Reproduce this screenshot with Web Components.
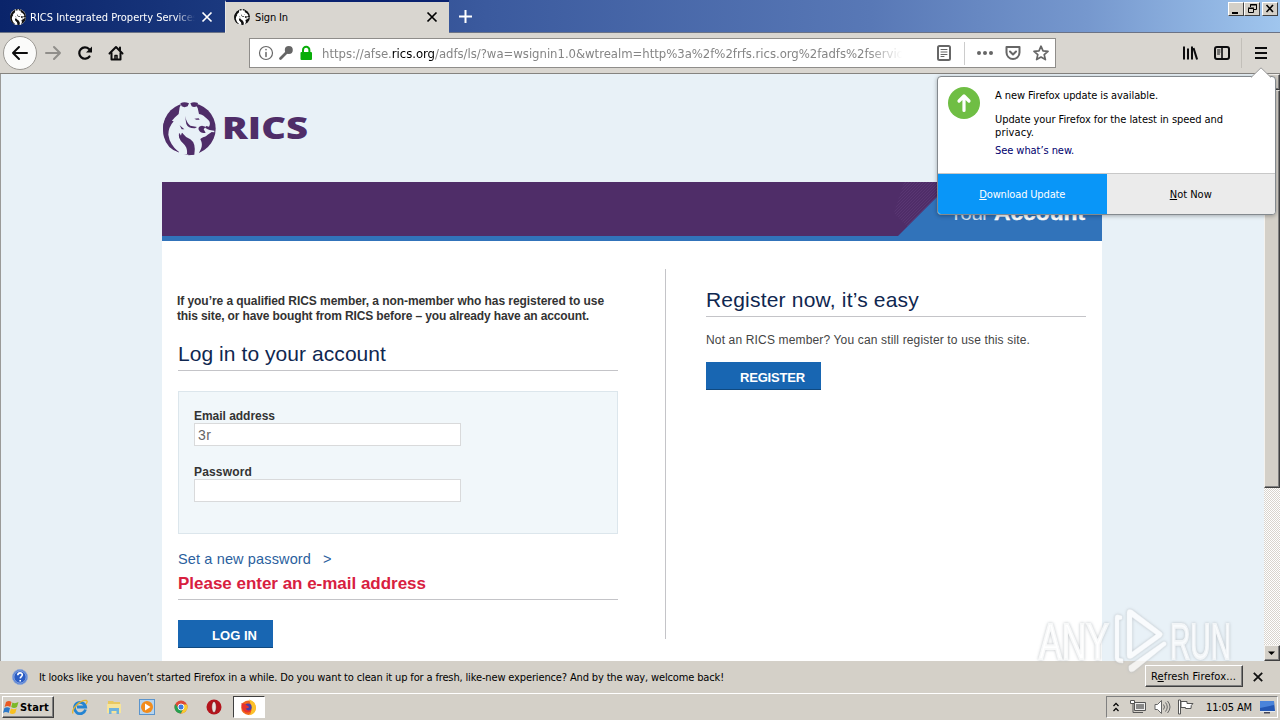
<!DOCTYPE html>
<html lang="en">
<head>
<meta charset="utf-8">
<title>Sign In</title>
<style>
body {
  margin: 0;
  width: 1280px;
  height: 720px;
  overflow: hidden;
  font: 11px/13px "DejaVu Sans Condensed", "DejaVu Sans", sans-serif;
  color: #000;
}
</style>
</head>
<body>
<desktop-screen>
  <tab-strip>
    <browser-tab label="RICS Integrated Property Services" fit="168"></browser-tab>
    <browser-tab active label="Sign In" fit="33"></browser-tab>
  </tab-strip>
  <nav-bar></nav-bar>
  <web-view>
    <rics-logo></rics-logo>
    <account-card>
      <div slot="login">
        <lead-text>
          <fit-text w="427">If you’re a qualified RICS member, a non-member who has registered to use</fit-text>
          <fit-text w="412">this site, or have bought from RICS before – you already have an account.</fit-text>
        </lead-text>
        <section-heading><fit-text w="208">Log in to your account</fit-text></section-heading>
        <login-fields>
          <form-field label="Email address" fit="81" value="3r"></form-field>
          <form-field label="Password" fit="58"></form-field>
        </login-fields>
        <link-line><fit-text w="133">Set a new password</fit-text></link-line>
        <error-line><fit-text w="248">Please enter an e-mail address</fit-text></error-line>
        <action-button style="width:95px"><fit-text w="45">LOG IN</fit-text></action-button>
      </div>
      <div slot="register">
        <section-heading><fit-text w="213">Register now, it’s easy</fit-text></section-heading>
        <plain-text><fit-text w="324">Not an RICS member? You can still register to use this site.</fit-text></plain-text>
        <action-button style="width:115px"><fit-text w="65">REGISTER</fit-text></action-button>
      </div>
    </account-card>
  </web-view>
  <notice-bar><fit-text w="685">It looks like you haven’t started Firefox in a while. Do you want to clean it up for a fresh, like-new experience? And by the way, welcome back!</fit-text></notice-bar>
  <task-bar></task-bar>
  <update-popup slot="over"></update-popup>
  <water-mark slot="over"></water-mark>
</desktop-screen>

<script>
// Registers an element whose shadow root holds the given markup.
function define(name, html) {
  customElements.define(name, class extends HTMLElement {
    constructor() {
      super()
      const shadow = this.attachShadow({mode: 'open'})
      shadow.innerHTML = typeof html == 'function' ? html(this) : html
    }
  })
}

// One line of text, spaced so that it comes out w pixels wide.
class FitText extends HTMLElement {
  constructor() {
    super()
    this.attachShadow({mode: 'open'}).innerHTML = `
<style>
:host { display: block; white-space: nowrap; }
span { display: inline-block; }
</style>
<span><slot></slot></span>`
  }
  connectedCallback() {
    const span = this.shadowRoot.querySelector('span')
    const w = Number(this.getAttribute('w'))
    const n = this.textContent.length
    if (!w || !n) return
    span.style.letterSpacing = '0px'
    const natural = span.getBoundingClientRect().width
    span.style.letterSpacing = (w - natural) / n + 'px'
  }
}

const lion = `
<ellipse cx="81" cy="80" rx="79" ry="78" fill="var(--ink)"/>
<path fill="var(--paper)" d="M49 0 56 8 52 16 49 36 C38 46 26 56 22 70 L26 68 C14 84 14 96 19 112 C24 130 36 142 50 150 L46 156 66 158
 L74 156 C76 140 70 132 62 124 C52 114 48 104 50 92 L56 103 59 92 64 103 C70 116 86 118 92 132 C96 142 96 150 94 160 L106 158
 C120 140 122 126 114 112 C118 104 130 106 136 98 L148 90 156 91 156 86 142 84 136 82 128 77 132 72 140 74 C144 68 144 60 138 54
 C126 42 118 36 110 36 L106 18 102 12 108 0 Z"/>
<path fill="var(--ink)" d="M54 4Q66-2 80 4L76 13Q66 18 58 13ZM84 4Q94-2 107 3L104 12Q96 17 88 13Z"/>
<path fill="var(--ink)" d="M68 42Q73 64 84 71L104 75 98 79Q78 80 72 66ZM96 50 109 49 112 53 102 53ZM109 83Q106 73 119 71L130 74 124 82 130 92Q116 96 109 83ZM52 70 66 82 58 82Z"/>
<path fill="var(--ink)" d="M59 92Q70 106 84 112Q102 124 96 158L78 160Q82 138 68 124 54 112 50 104L52 94 56 103Z"/>
<path fill="var(--paper)" d="M26 62Q12 74 14 96 18 128 50 151 22 124 30 92 34 78 50 66Z"/>
<path fill="var(--ink)" d="M2 78Q3 58 14 44L20 54 34 58Q18 76 18 98 22 128 50 151 14 142 4 102Z"/>`

define('desktop-screen', `
<style>
:host {
  position: relative;
  display: grid;
  grid-template-rows: 33px 40px 588px 32px 27px;
  width: 1280px;
  height: 720px;
}
</style>
<slot></slot>
<slot name="over"></slot>`)

define('tab-strip', `
<style>
:host {
  display: flex;
  box-sizing: border-box;
  height: 33px;
  border-bottom: 1px solid #6b7386;
  background: linear-gradient(90deg, #0a246a, #3b5a9e 38%, #5878b6 68%, #7698ce 85%, #a0c6ee);
}
.plus { width: 15px; height: 15px; margin: 9px; }
.win { display: flex; margin: 2px 2px 0 auto; height: 14px; }
.win i {
  width: 16px;
  height: 14px;
  box-sizing: border-box;
  background: #d4d0c8;
  border: 1px solid;
  border-color: #fff #404040 #404040 #fff;
}
.win i:last-child { margin-left: 2px; }
svg { display: block; }
</style>
<slot></slot>
<svg class="plus" viewBox="0 0 15 15" stroke="#fff" stroke-width="2"><path d="M7.500 1v13M1 7.500h13"/></svg>
<div class="win">
  <i><svg width="14" height="12"><path d="M3 9h6v2H3z"/></svg></i>
  <i><svg width="14" height="12" fill="none" stroke="#000"><path d="M5.500 4V1.500h6v5H9M5 2h7M3.500 5.500h5v4h-5zM3 5h6"/></svg></i>
  <i><svg width="14" height="12" stroke="#000" stroke-width="1.600"><path d="m3.500 2 6.500 7M10 2 3.500 9"/></svg></i>
</div>`)

define('browser-tab', el => `
<style>
:host {
  display: flex;
  align-items: center;
  box-sizing: border-box;
  width: 225px;
  height: 33px;
  padding: 2px 12px 0 10px;
  color: #fff;
  background: linear-gradient(90deg, #0a246a, #1b397f);
  border-bottom: 1px solid #6b7386;
  --ink: #111;
  --paper: #fff;
}
:host([active]) {
  width: 224px;
  color: #000;
  background: #d9d6d0;
  border-top: 2px solid #0a2270;
  border-bottom: 0;
  padding: 0 11px 1px 10px;
  border-left: 1px solid #e8e6e2;
}
.ico { width: 16px; height: 16px; margin-right: 4px; flex: none; }
:host([active]) .ico { margin-left: -2px; margin-right: 5px; }
.label { flex: 1; overflow: hidden; }
:host(:not([active])) .label { -webkit-mask: linear-gradient(90deg, #000 88%, transparent); }
.x { width: 12px; height: 12px; flex: none; margin-left: 6px; }
</style>
<svg class="ico" viewBox="0 0 160 160"><circle cx="80" cy="80" r="80" fill="#fff"/>${lion}</svg>
<div class="label"><fit-text w="${el.getAttribute('fit')}">${el.getAttribute('label')}</fit-text></div>
<svg class="x" viewBox="0 0 12 12" stroke="currentColor" stroke-width="1.700"><path d="m1.500 1.500 9 9M10.500 1.500l-9 9"/></svg>`)

define('nav-bar', `
<style>
:host {
  display: flex;
  align-items: center;
  box-sizing: border-box;
  height: 41px;
  padding: 0 11px 0 3px;
  background: #d9d6d0;
  border-bottom: 1px solid #85837f;
  color: #0c0c0d;
}
svg { display: block; fill: none; stroke: currentColor; stroke-width: 2; flex: none; stroke-linecap: round; stroke-linejoin: round; }
.back { width: 34px; height: 34px; box-sizing: border-box; border: 1px solid #9b9893; border-radius: 50%; background: #fbfbfa; display: grid; place-items: center; }
.nav { display: flex; gap: 15px; margin-left: 8px; align-items: center; }
.url {
  display: flex;
  align-items: center;
  box-sizing: border-box;
  width: 807px;
  height: 30px;
  margin-left: 125px;
  padding: 0 6px 0 8px;
  border: 1px solid #8f8d8a;
  background: #fff;
  color: #666;
}
.ids { display: flex; gap: 4px; margin-right: 8px; }
.addr { width: 580px; overflow: hidden; font-size: 13px; line-height: 18px; color: #858585; -webkit-mask: linear-gradient(90deg, #000 94%, transparent); }
.addr fit-text { padding-top: 1px; }
.addr b { font-weight: normal; color: #000; }
.acts { display: flex; margin-left: auto; align-items: center; }
.sep { width: 1px; height: 23px; background: #ccc; margin: 0 12px 0 13px; }
.end { display: flex; align-items: center; margin-left: auto; }
.end .sep { height: 30px; background: #c2bfb9; margin: 0 11px 0 11px; }
</style>
<div class="back"><svg width="18" height="16"><path d="M16 8H2M8 2 2 8l6 6"/></svg></div>
<div class="nav">
  <svg width="17" height="16" style="color:#908e8a"><path d="M1 8h14M9 2l6 6-6 6"/></svg>
  <svg width="16" height="16" style="stroke-width:2.200"><path d="M12.500 11.500A5.700 5.700 0 1 1 12 4"/><path d="M15 1.500v6H9z" fill="currentColor" stroke="none"/></svg>
  <svg width="16" height="16"><path d="M1.500 8.500 8 2l6.500 6.500"/><path d="M3.500 8v6.500h9V8M12 2.500V5"/><path d="M7 14v-3.500h2V14" stroke-width="1.500"/></svg>
</div>
<div class="url">
  <div class="ids">
    <svg width="16" height="16"><circle cx="8" cy="8" r="6.500" style="stroke-width:1.200"/><path d="M8 7.500v4M8 4.600v.1" style="stroke-width:1.500"/></svg>
    <svg width="16" height="16"><path d="M9 7 2.500 13.500" style="stroke-width:2.800"/><circle cx="10.800" cy="5" r="4" fill="currentColor" stroke="none"/></svg>
    <svg width="16" height="16" style="color:#08ad08"><rect x="2.500" y="7" width="11.500" height="8" rx="1" fill="currentColor" stroke="none"/><path d="M5 8V5a3.200 3.200 0 0 1 6.400 0v3"/></svg>
  </div>
  <div class="addr"><fit-text w="581">https://afse.<b>rics.org</b>/adfs/ls/?wa=wsignin1.0&amp;wtrealm=http%3a%2f%2frfs.rics.org%2fadfs%2fservic</fit-text></div>
  <div class="acts">
    <svg width="14" height="16"><rect x="1" y="1" width="12" height="14" rx="1.500"/><path d="M4 4.500h6M4 7h6M4 9.500h6M4 11.500h3" style="stroke-width:1"/></svg>
    <div class="sep"></div>
    <svg width="16" height="16" style="fill:#666;stroke:none"><circle cx="2" cy="8" r="2"/><circle cx="8" cy="8" r="2"/><circle cx="14" cy="8" r="2"/></svg>
    <svg width="16" height="16" style="margin:0 12px"><path d="M1.500 2h13v5.500a6.500 6.500 0 0 1-13 0zM5 6.500l3 3 3-3"/></svg>
    <svg width="16" height="16" style="stroke-width:1.700"><path d="m8 1.200 2 4.600 5 .5-3.800 3.300 1.200 5L8 12l-4.400 2.600 1.200-5L1 6.300l5-.5z"/></svg>
  </div>
</div>
<div class="end">
  <svg width="16" height="16" style="stroke-linecap:butt"><path d="M2 1.500v13M6 3.500v11M10 1.500v13" /><path d="m11.500 3 3.600 11.500" /></svg>
  <svg width="16" height="16" style="margin-left:16px"><rect x="1" y="2" width="14" height="12" rx="2"/><path d="M8 2v12" style="stroke-width:1.600"/><path d="M3.500 5H6M3.500 7H6M3.500 9H5.500" style="stroke-width:1"/></svg>
  <div class="sep"></div>
  <svg width="16" height="16" style="stroke-linecap:butt"><path d="M2 3h12M2 8h12M2 13h12"/></svg>
</div>`)

define('web-view', `
<style>
:host {
  display: grid;
  grid-template-columns: 1fr 16px;
  grid-row: 3;
  box-sizing: border-box;
  height: 587px;
  margin-top: 1px;
  border-left: 1px solid #9a9a98;
  background: #e8f1f7;
  overflow: hidden;
}
.page { padding: 0 0 0 161px; width: 940px; }
.bar {
  display: flex;
  flex-direction: column;
  background: repeating-conic-gradient(#fff 0 25%, #d8d4cd 0 50%) 0 0/2px 2px;
}
.bar div {
  box-sizing: border-box;
  height: 16px;
  background: #d4d0c8;
  border: 1px solid;
  border-color: #f4f2ee #404040 #404040 #f4f2ee;
  box-shadow: inset -1px -1px #808080;
}
.bar .thumb { height: 398px; margin-bottom: 157px; }
svg { display: block; }
</style>
<div class="page"><slot></slot></div>
<div class="bar">
  <div><svg width="14" height="14"><path d="M3 9h7L6.500 5.500z"/></svg></div>
  <div class="thumb"></div>
  <div><svg width="14" height="14"><path d="M3 5.500h7L6.500 9z"/></svg></div>
</div>`)

define('rics-logo', `
<style>
:host { display: flex; height: 108px; --ink: #4f2d68; --paper: #e8f1f7; }
svg { display: block; }
.lion { width: 54px; height: 54px; margin: 28px 6px 0 0; }
</style>
<svg class="lion" viewBox="-1 0 162 162">${lion}</svg>
<svg width="90" height="80" fill="var(--ink)"><text x="0" y="65" font-family="Open Sans" font-weight="800" font-size="29.500" textLength="86" lengthAdjust="spacingAndGlyphs">RICS</text></svg>`)

define('account-card', `
<style>
:host { display: block; width: 940px; height: 479px; background: #fff; }
.banner { height: 59px; }
.banner svg { display: block; }
.cols { display: flex; }
.login { width: 440px; padding: 53px 47px 0 16px; }
.register { width: 380px; padding: 46px 0 0 40px; }
.rule { width: 1px; height: 370px; margin-top: 28px; background: #c4c4c8; }
</style>
<div class="banner">
  <svg width="940" height="59">
    <defs><pattern id="hatch" width="3" height="3" patternUnits="userSpaceOnUse"><path d="M0 3 3 0" stroke="#6a4684" stroke-width="0.600"/></pattern></defs>
    <rect width="940" height="59" fill="#4f2d68"/>
    <path d="M742 0h49l-45 45-14-14z" fill="url(#hatch)" opacity=".6"/>
    <path d="M736 54 790 0H940V59H0V54z" fill="#3173ba"/>
    <g font-size="21" fill="#fff">
      <text x="787" y="37.500" font-family="Liberation Sans" fill="#cfe0f2" textLength="40">Your</text>
      <text x="832" y="37.500" font-family="Liberation Sans" font-weight="bold" stroke="#fff" stroke-width=".4" textLength="91" lengthAdjust="spacingAndGlyphs">Account</text>
    </g>
  </svg>
</div>
<div class="cols">
  <div class="login"><slot name="login"></slot></div>
  <div class="rule"></div>
  <div class="register"><slot name="register"></slot></div>
</div>`)

define('lead-text', `
<style>
:host { display: block; height: 47px; font: bold 12px/15px "Liberation Sans", Arial, sans-serif; color: #333; margin-left: -1px; }
</style>
<slot></slot>`)

define('section-heading', `
<style>
:host {
  display: block;
  box-sizing: border-box;
  height: 30px;
  margin-bottom: 20px;
  border-bottom: 1px solid #c4c4c8;
  font: 21px/26px "Liberation Sans", Arial, sans-serif;
  color: #0f2750;
}
</style>
<slot></slot>`)

define('login-fields', `
<style>
:host {
  display: flex;
  flex-direction: column;
  box-sizing: border-box;
  height: 143px;
  padding: 17px 15px 0;
  border: 1px solid #dce6ec;
  background: #f1f7fa;
}
</style>
<slot></slot>`)

define('form-field', el => `
<style>
:host { display: block; height: 56px; font: bold 12px/14px "Liberation Sans", Arial, sans-serif; color: #333; }
.box {
  box-sizing: border-box;
  width: 267px;
  height: 23px;
  padding: 0 3px;
  border: 1px solid #d9dadb;
  background: #fff;
  font: 14px/22px "Liberation Sans", Arial, sans-serif;
  letter-spacing: .5px;
  color: #666;
}
</style>
<fit-text w="${el.getAttribute('fit')}">${el.getAttribute('label')}</fit-text>
<div class="box">${el.getAttribute('value') || ''}</div>`)

define('link-line', `
<style>
:host { display: flex; gap: 12px; padding-top: 16px; font: 14.500px/18px "Liberation Sans", Arial, sans-serif; color: #2b5f9e; }
</style>
<slot></slot><span>&gt;</span>`)

define('error-line', `
<style>
:host {
  display: block;
  box-sizing: border-box;
  height: 32px;
  padding-top: 6px;
  margin-bottom: 20px;
  border-bottom: 1px solid #c4c4c8;
  font: bold 17px/20px "Liberation Sans", Arial, sans-serif;
  color: #d8203f;
}
</style>
<slot></slot>`)

define('plain-text', `
<style>
:host { display: block; height: 29px; margin-top: -4px; font: 12px/15px "Liberation Sans", Arial, sans-serif; color: #444; }
</style>
<slot></slot>`)

define('action-button', `
<style>
:host {
  display: block;
  box-sizing: border-box;
  height: 28px;
  padding-left: 34px;
  border-bottom: 1px solid #10497f;
  background: #1866b2;
  font: bold 13px/31px "Liberation Sans", Arial, sans-serif;
  color: #fff;
}
</style>
<slot></slot>`)

define('update-popup', `
<style>
:host {
  position: absolute;
  left: 937px;
  top: 76px;
  box-sizing: border-box;
  width: 339px;
  height: 139px;
  display: flex;
  flex-direction: column;
  border: 1px solid #83898e;
  border-radius: 4px;
  background: #fff;
  box-shadow: 0 1px 4px rgba(0, 0, 0, .3);
}
.arrow { position: absolute; right: 4px; top: -10px; }
.body { display: flex; flex: 1; padding: 10px 0 0 10px; }
.text { margin: 2px 0 0 15px; }
p { margin: 0 0 11px; }
.link { color: #00006e; margin-top: -6px; }
.btns { display: flex; height: 41px; box-sizing: border-box; border-top: 1px solid #c8c8c8; background: #ebebeb; border-radius: 0 0 3px 3px; overflow: hidden; }
.btns div { display: grid; place-items: center; flex: 1; }
.btns .main { background: #0996f8; color: #fff; }
u { text-underline-offset: 1px; }
</style>
<svg class="arrow" width="20" height="11"><path d="M0 10.500 10 .8 20 10.500" fill="#fff" stroke="#9a9a9a"/></svg>
<div class="body">
  <svg width="32" height="32"><circle cx="16" cy="16" r="16" fill="#6fbe44"/><path d="M16 23.500V9.500M11 14l5-5 5 5" fill="none" stroke="#fff" stroke-width="3.200" stroke-linejoin="round" stroke-linecap="round"/></svg>
  <div class="text">
    <p><fit-text w="163">A new Firefox update is available.</fit-text></p>
    <p><fit-text w="228">Update your Firefox for the latest in speed and</fit-text><fit-text w="39">privacy.</fit-text></p>
    <p class="link"><fit-text w="79">See what’s new.</fit-text></p>
  </div>
</div>
<div class="btns">
  <div class="main"><fit-text w="86"><u>D</u>ownload Update</fit-text></div>
  <div><fit-text w="42"><u>N</u>ot Now</fit-text></div>
</div>`)

define('notice-bar', `
<style>
:host { display: flex; grid-row: 4; align-items: center; padding: 0 17px 0 12px; background: #d4d0c8; }
.msg { margin: 0 auto 0 11px; }
.btn {
  box-sizing: border-box;
  width: 98px;
  height: 22px;
  padding: 4px 0 0 5px;
  border: 1px solid;
  border-color: #fff #404040 #404040 #fff;
  box-shadow: inset -1px -1px #808080;
  margin: -2px 10px 0 0;
}
</style>
<svg width="16" height="16"><circle cx="8" cy="8" r="7.500" fill="#2a5cc4" stroke="#8ea9da"/><circle cx="8" cy="8" r="6.200" fill="none" stroke="#c8d8f4" stroke-width=".7"/><path d="M5.800 6.300C5.800 3 10.500 3.300 10.300 6c-.1 1.600-2 1.600-2.100 3.400M8.200 11v1.500" fill="none" stroke="#fff" stroke-width="1.600"/></svg>
<div class="msg"><slot></slot></div>
<div class="btn"><fit-text w="85">R<u>e</u>fresh Firefox...</fit-text></div>
<svg width="10" height="10" stroke="#111" stroke-width="1.800"><path d="m.8.8 8.400 8.400M9.200.8.800 9.200"/></svg>`)

define('task-bar', `
<style>
:host { display: flex; grid-row: 5; box-sizing: border-box; height: 27px; padding: 2px 2px 0; background: #d4d0c8; border-top: 1px solid #fff; }
svg { display: block; flex: none; }
.start {
  display: flex;
  align-items: center;
  box-sizing: border-box;
  width: 52px;
  height: 22px;
  border: 1px solid;
  border-color: #fff #404040 #404040 #fff;
  box-shadow: inset -1px -1px #808080;
  font-weight: bold;
}
.apps { display: flex; align-items: center; gap: 17.500px; height: 22px; margin-left: 18px; }
.apps .on {
  display: grid;
  place-items: center;
  box-sizing: border-box;
  width: 32px;
  height: 22px;
  margin-left: -7px;
  background: #fff;
  border: 1px solid;
  border-color: #404040 #fff #fff #404040;
}
.tray {
  display: flex;
  align-items: center;
  box-sizing: border-box;
  width: 172px;
  height: 22px;
  margin-left: auto;
  padding-left: 5px;
  border: 1px solid;
  border-color: #808080 #fff #fff #808080;
}
</style>
<div class="start">
  <svg width="17" height="17" viewBox="0 0 17 17"><path d="M3 3q3-2 5.500 0L7.300 8Q4.500 6 1.600 8z" fill="#ea5a24"/><path d="M9.400 3.500Q12 5 15.500 3L14 8q-3 2-5.800 0z" fill="#7cb828"/><path d="M1.400 9Q4 7.500 7 9L5.700 14Q3 12 0 14z" fill="#2c78c8"/><path d="M8 9.400q3 1.600 5.700-.2L12.300 14q-3 2-5.700 0z" fill="#f8c020"/></svg>
  <fit-text w="29">Start</fit-text>
</div>
<div class="apps">
  <svg width="16" height="16"><path d="M13.500 10.500A5.600 5.600 0 1 1 13.600 8H5" fill="none" stroke="#2484d2" stroke-width="2.800"/><path d="M1 14.500C-1 10 9 0 14.500 1.500c1.500.8 0 3-.6 3.600" fill="none" stroke="#e6b42c" stroke-width="1.300"/></svg>
  <svg width="16" height="16"><path d="M2 2h5l1 1h6v9H2z" fill="#e8c860"/><path d="M1 5h14v9H1z" fill="#f6e49a"/><path d="M3 9h10v6h-2.500v-3h-5v3H3z" fill="#6fb2dc"/></svg>
  <svg width="16" height="16"><rect x=".5" y=".5" width="15" height="15" fill="#b6d4ee" stroke="#5b94cc"/><circle cx="8" cy="8" r="6" fill="#f28c1c"/><path d="M6 4.500v7L11.500 8z" fill="#fff"/></svg>
  <svg width="16" height="16"><circle cx="8" cy="8" r="6.500" fill="#dd4a38"/><path d="M2.200 5A6.500 6.500 0 0 0 8 14.500L10.500 9H5.500z" fill="#26a050"/><path d="M14 5.500A6.500 6.500 0 0 1 8 14.500L10.800 9 9 5.500z" fill="#f8cc30"/><circle cx="8" cy="8" r="3" fill="#3d7be0" stroke="#fff" stroke-width=".9"/></svg>
  <svg width="16" height="16"><ellipse cx="8" cy="8" rx="7.500" ry="7.500" fill="#b4141c"/><ellipse cx="8" cy="8" rx="2.300" ry="5.600" fill="#e9e4e0" stroke="#780a10" stroke-width=".6"/></svg>
  <div class="on"><svg width="17" height="17"><circle cx="8.500" cy="8.700" r="7.300" fill="#f1661c"/><path d="M9 .6q6.800 2 7 8.400-.4 6.400-7 7.200Q14 12 9 .6z" fill="#fcc22a"/><circle cx="8" cy="8.300" r="3.700" fill="#4a3ea8"/><path d="M1.500 4Q5 4 7 6.500 9 7 9 8.400L5.600 9.800Q8 13 12 10.500 10 14.500 5.500 13.200 1 11 1.500 4z" fill="#e8332e"/></svg></div>
</div>
<div class="tray">
  <svg width="8" height="12" fill="none" stroke="#000" stroke-width="1.300"><path d="m1.500 5 2.500-2.600L6.500 5M1.500 10 4 7.400 6.500 10"/></svg>
  <svg width="17" height="16" style="margin:0 7px 0 10px" stroke="#555"><path d="M4.500 3.500h11v8h-11z" fill="#eee"/><path d="M6 5h8v5H6z" fill="#888" stroke="none"/><path d="M3 5v8.500h10" fill="none"/><path d="M.5 1.500h4v3h-4z" fill="#fff"/></svg>
  <svg width="17" height="16" stroke="#666" fill="#fff"><path d="M1 5.500h2.500l4-4v13l-4-4H1z"/><path d="M9.500 5.500q2 2.500 0 5M11.500 3.500q3.500 4.500 0 9M13.500 2q5 6 0 12" fill="none" stroke-width="1"/></svg>
  <svg width="17" height="16" style="margin:0 12px 0 6px" stroke="#555" fill="#fff"><path d="M1.500 1v14h2V1zM4 2.500h6v2h6q-2.500 1.500-2 5H8.500v-1H4z"/></svg>
  <fit-text w="46">11:05 AM</fit-text>
  <svg width="17" height="14" style="margin-left:7px"><path d="M1 1h14l1 10H1z" fill="#2458b4"/><path d="M1 1h14v4L1 8z" fill="#4a84da"/><path d="M1 11.500h15" stroke="#e2e8ee"/><path d="M5 12h6v1.500H5z" fill="#445"/></svg>
</div>`)

define('water-mark', `
<style>
:host { position: absolute; left: 1034px; top: 604px; opacity: .75; }
svg { display: block; filter: drop-shadow(0 0 1.500px #aab0b5); }
</style>
<svg width="212" height="74" viewBox="-2 -2 212 74" fill="#fff" stroke="#f6f7f8" stroke-width="2">
  <g font-family="Liberation Sans Narrow, Liberation Sans" font-size="50">
    <text x="3" y="53" textLength="70" lengthAdjust="spacingAndGlyphs">ANY</text>
    <text x="134" y="53" textLength="61" lengthAdjust="spacingAndGlyphs">RUN</text>
  </g>
  <path stroke-width=".5" fill-rule="evenodd" d="M79 12q0-4 4-3l3 1v3l-3 1v38l4 1v4q-8 0-8-5zM91 7q0-5 5-3l29 22q3 2 0 5L96 52q-5 2-5-3zM96 11v35l24-17.500zM93 60l34-24q4-1 3 3L98 65q-6 3-5-5z"/>
</svg>`)

customElements.define('fit-text', FitText)
</script>
</body>
</html>
